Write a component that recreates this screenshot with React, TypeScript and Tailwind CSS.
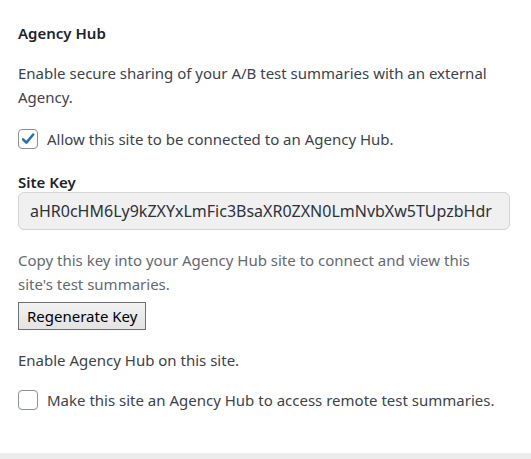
import React from "react";

const CheckIcon: React.FC = () => (
  <svg viewBox="0 0 20 20" className="h-[18px] w-[18px]">
    <path d="M4.5 10.3l3.7 3.7L15.8 5" fill="none" stroke="#2271b1" strokeWidth="2.8" strokeLinecap="round" strokeLinejoin="round" />
  </svg>
);

interface CheckRowProps {
  checked?: boolean;
  label: string;
}

const CheckRow: React.FC<CheckRowProps> = ({ checked, label }) => (
  <label className="flex items-center gap-[9px] leading-[24px]">
    <span className="flex h-[20px] w-[20px] items-center justify-center rounded-[4px] border border-[#8c8f94] bg-white">
      {checked && <CheckIcon />}
    </span>
    <span>{label}</span>
  </label>
);

const App: React.FC = () => {
  return (
    <div className="flex h-[459px] w-[531px] flex-col bg-white font-['Noto_Sans',sans-serif] text-[15px] text-[#3c434a]">
      <div className="flex-1 px-[18px] pt-[22px]">
        <h2 className="text-[15px] font-semibold leading-[22px] text-[#1d2327]">Agency Hub</h2>
        <p className="mt-[17px] leading-[24px]">
          Enable secure sharing of your A/B test summaries with an external Agency.
        </p>
        <div className="mt-[18px]">
          <CheckRow checked label="Allow this site to be connected to an Agency Hub." />
        </div>
        <div className="mt-[21px] font-semibold leading-[20px] text-[#1d2327]">Site Key</div>
        <input
          readOnly
          value="aHR0cHM6Ly9kZXYxLmFic3BsaXR0ZXN0LmNvbXw5TUpzbHdr"
          className="mt-0 h-[38px] w-[492px] rounded-[6px] border border-[#d4d4d4] bg-[#f0f0f0] px-[11px] text-[16px] text-[#2c3338] outline-none"
        />
        <p className="mt-[18px] max-w-[485px] leading-[24px] text-[#646970]">
          Copy this key into your Agency Hub site to connect and view this site's test summaries.
        </p>
        <button className="mt-[6px] h-[28px] border border-[#707070] bg-gradient-to-b from-[#f2f2f2] to-[#e3e3e3] px-[8px] text-[15px] leading-[20px] text-black">
          Regenerate Key
        </button>
        <p className="mt-[18px] leading-[24px]">Enable Agency Hub on this site.</p>
        <div className="mt-[16px]">
          <CheckRow label="Make this site an Agency Hub to access remote test summaries." />
        </div>
      </div>
      <div className="h-[6px] bg-[#ececec]" />
    </div>
  );
};

export default App;
